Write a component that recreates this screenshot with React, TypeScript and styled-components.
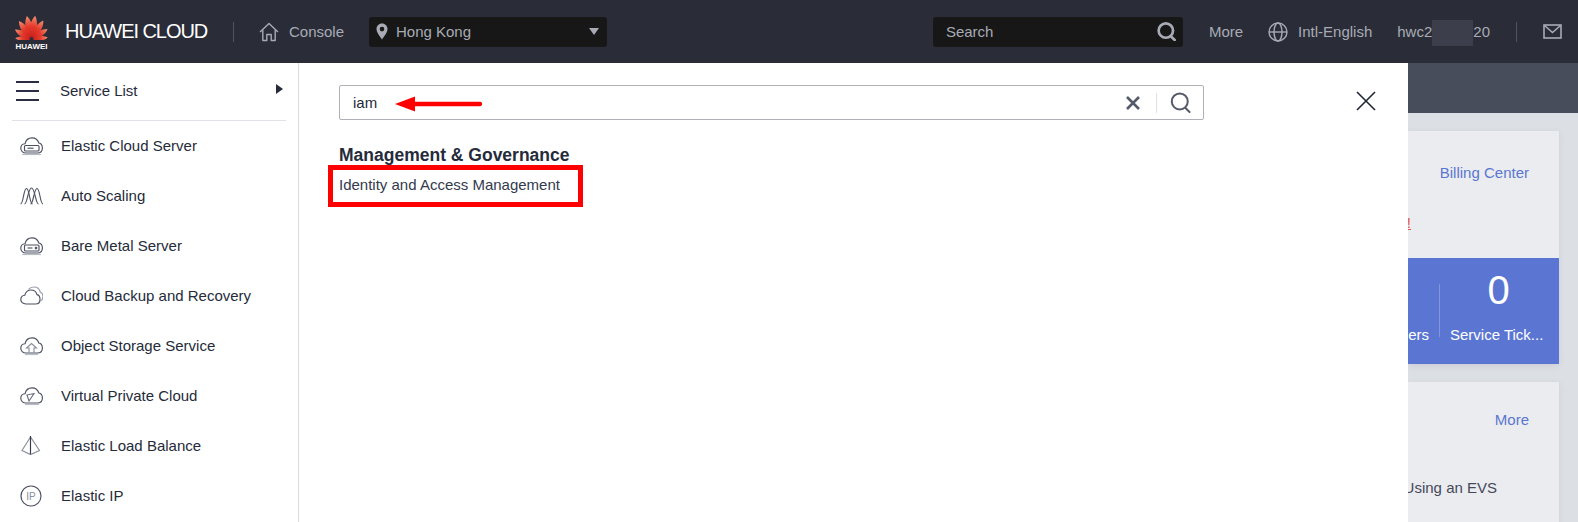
import { FC, ReactNode } from "react";
import styled, { createGlobalStyle } from "styled-components";

const GlobalStyle = createGlobalStyle`
  html, body {
    margin: 0;
    padding: 0;
    background: #dcdfe4;
  }
  body {
    font-family: "Liberation Sans", Arial, sans-serif;
    font-size: 15px;
    color: #252b3a;
  }
  * {
    box-sizing: border-box;
  }
`;

const Page = styled.div`
  width: 1578px;
  height: 522px;
  display: flex;
  flex-direction: column;
  overflow: hidden;
`;

const Header = styled.header`
  height: 63px;
  flex: none;
  display: flex;
  align-items: center;
  background: #2a2d38;
  color: #a8abb5;
  padding-left: 15px;
  padding-right: 16px;
`;

const LogoWrap = styled.div`
  width: 33px;
  display: flex;
  flex-direction: column;
  align-items: center;
  margin-right: 17px;
  padding-top: 2px;
`;

const LogoText = styled.span`
  color: #fff;
  font-size: 8px;
  font-weight: bold;
  line-height: 9px;
  margin-top: 2px;
  white-space: nowrap;
`;

const Brand = styled.span`
  color: #fff;
  font-size: 20px;
  white-space: nowrap;
  width: 143px;
  letter-spacing: -1.05px;
`;

const HeaderDivider = styled.span<{ $gap: number }>`
  width: 1px;
  height: 20px;
  background: #50535f;
  margin-left: ${({ $gap }) => $gap}px;
  flex: none;
`;

const ConsoleLink = styled.a`
  display: flex;
  align-items: center;
  gap: 10px;
  margin-left: 25px;
  width: 110px;
`;

const DarkField = styled.div<{ $width: number }>`
  width: ${({ $width }) => $width}px;
  height: 30px;
  background: #171717;
  border-radius: 3px;
  display: flex;
  align-items: center;
`;

const RegionField = styled(DarkField)`
  padding: 0 8px 0 7px;
  gap: 8px;
  margin-right: auto;
`;

const RegionName = styled.span`
  flex: 1;
`;

const Caret = styled.span`
  width: 0;
  height: 0;
  border-left: 5px solid transparent;
  border-right: 5px solid transparent;
  border-top: 7px solid #a8abb5;
`;

const SearchField = styled(DarkField)`
  padding: 0 7px 0 13px;
  justify-content: space-between;
  margin-right: 26px;
`;

const NavItem = styled.span<{ $gap: number }>`
  display: flex;
  align-items: center;
  gap: 10px;
  margin-right: ${({ $gap }) => $gap}px;
  white-space: nowrap;
`;

const MailItem = styled.span`
  display: flex;
  margin-left: 26px;
`;

const User = styled.span`
  display: flex;
  align-items: center;
`;

const Blur = styled.span`
  width: 41px;
  height: 26px;
  margin-top: 2px;
  background: #3c3f4b;
`;

const Body = styled.div`
  flex: 1;
  min-height: 0;
  display: flex;
`;

const Sidebar = styled.aside`
  width: 299px;
  flex: none;
  background: #fff;
  border-right: 1px solid #d8dade;
`;

const SidebarTitle = styled.div`
  height: 58px;
  margin: 0 12px;
  border-bottom: 1px solid #dfe1e6;
  display: flex;
  align-items: center;
  padding-left: 4px;
`;

const Burger = styled.span`
  width: 23px;
  height: 20px;
  border-top: 2px solid #2a2d44;
  border-bottom: 2px solid #2a2d44;
  display: flex;
  align-items: center;
  margin-top: -2px;
  &::before {
    content: "";
    width: 100%;
    height: 2px;
    background: #2a2d44;
  }
`;

const TitleText = styled.span`
  margin-left: 21px;
  flex: 1;
  margin-top: -3px;
`;

const TitleArrow = styled.span`
  width: 0;
  height: 0;
  margin-right: 3px;
  margin-top: -5px;
  border-top: 5px solid transparent;
  border-bottom: 5px solid transparent;
  border-left: 7px solid #252b3a;
`;

const ServiceList = styled.ul`
  list-style: none;
  margin: -1px 0 0;
  padding: 0 0 0 20px;
`;

const ServiceRow = styled.li`
  height: 50px;
  display: flex;
  align-items: center;
  gap: 18px;
  color: #252b3a;
  white-space: nowrap;
`;

const ServiceIcon = styled.svg`
  width: 23px;
  height: 23px;
  flex: none;
  fill: none;
  stroke: #4d5162;
  stroke-width: 1.15;
`;

const Panel = styled.section`
  width: 1109px;
  flex: none;
  background: #fff;
  position: relative;
  padding: 22px 0 0 40px;
`;

const SearchBox = styled.div`
  width: 865px;
  height: 35px;
  border: 1px solid #b0b0bb;
  border-radius: 2px;
  display: flex;
  align-items: center;
  padding: 0 12px 0 13px;
  position: relative;
`;

const QueryText = styled.span`
  flex: 1;
  color: #252b3a;
`;

const SearchSep = styled.span`
  width: 1px;
  height: 20px;
  background: #dfe1e6;
  margin: 0 13px 0 16px;
`;

const Arrow = styled.svg`
  position: absolute;
  left: 55px;
  top: 10px;
  width: 87px;
  height: 16px;
`;

const GroupTitle = styled.h3`
  margin: 25px 0 0;
  font-size: 17.5px;
  line-height: 20px;
  font-weight: bold;
  color: #252b3a;
`;

const ResultWrap = styled.div`
  position: relative;
  margin-top: 10px;
  line-height: 20px;
  color: #333a4d;
`;

const Highlight = styled.span`
  position: absolute;
  left: -11px;
  top: -10px;
  width: 255px;
  height: 42px;
  border: 5px solid #fe0000;
`;

const CloseButton = styled.svg`
  position: absolute;
  left: 1057px;
  top: 28px;
  width: 20px;
  height: 20px;
  stroke: #1f2433;
  stroke-width: 1.6;
`;

const Main = styled.main`
  flex: 1;
  min-width: 0;
  overflow: hidden;
  background: #dcdfe4;
`;

const TopStrip = styled.div`
  height: 50px;
  background: #484d5c;
  margin-bottom: 18px;
`;

const Card = styled.div`
  width: 151px;
  background: #ebecef;
  box-shadow: 0 2px 6px rgba(80, 90, 110, 0.12);
  margin-bottom: 18px;
`;

const CardHead = styled.div<{ $height: number }>`
  height: ${({ $height }) => $height}px;
  display: flex;
  justify-content: flex-end;
  align-items: center;
  padding-right: 30px;
`;

const CardLink = styled.a`
  color: #5a76d2;
  white-space: nowrap;
`;

const Warning = styled.div`
  height: 45px;
  display: flex;
  justify-content: flex-end;
  padding-right: 148px;
  color: #e2574c;
  text-decoration: underline;
  line-height: 20px;
`;

const Stats = styled.div`
  height: 106px;
  background: #5a76d2;
  color: #fff;
  display: flex;
  align-items: flex-start;
  padding-top: 26px;
`;

const StatLeft = styled.div`
  width: 32px;
  flex: none;
  height: 53px;
  border-right: 1px solid #8296dc;
  display: flex;
  justify-content: flex-end;
  align-items: flex-end;
  padding-right: 10px;
`;

const StatLeftLabel = styled.span`
  margin-bottom: -6px;
`;

const StatRight = styled.div`
  flex: 1;
  margin-top: -20px;
  padding-left: 10px;
  white-space: nowrap;
`;

const StatValue = styled.div`
  font-size: 40px;
  line-height: 52px;
  text-align: center;
  padding-right: 12px;
`;

const StatLabel = styled.div`
  margin-top: 9px;
  line-height: 20px;
`;

const DocCard = styled(Card)`
  min-height: 160px;
`;

const DocLine = styled.div`
  display: flex;
  justify-content: flex-end;
  padding-right: 62px;
  margin-top: 22px;
  white-space: nowrap;
  color: #44495a;
  line-height: 20px;
`;

const HuaweiLogo: FC = () => {
  const petals = [
    { angle: -84, size: 0.68 },
    { angle: -58, size: 0.8 },
    { angle: -33, size: 0.93 },
    { angle: -10, size: 1 },
    { angle: 10, size: 1 },
    { angle: 33, size: 0.93 },
    { angle: 58, size: 0.8 },
    { angle: 84, size: 0.68 },
  ];
  return (
    <svg width="33" height="25" viewBox="0 0 33 25">
      <defs>
        <linearGradient id="petal" x1="0" y1="0" x2="0" y2="1">
          <stop offset="0" stopColor="#f0906f" />
          <stop offset="0.5" stopColor="#e5392c" />
          <stop offset="1" stopColor="#c9201c" />
        </linearGradient>
      </defs>
      {petals.map(({ angle, size }) => (
        <path
          key={angle}
          d="M0 -2 C-5.4 -9 -4.4 -18 -0.5 -24 C3.4 -19 5 -9 0 -2 Z"
          fill="url(#petal)"
          transform={`translate(16.5 24.5) rotate(${angle}) scale(${size})`}
        />
      ))}
    </svg>
  );
};

const HomeIcon: FC = () => (
  <svg width="20" height="20" viewBox="0 0 20 20" fill="none" stroke="#a8abb5" strokeWidth="1.4" strokeLinejoin="round">
    <path d="M1 10 L10 1.5 L19 10" />
    <path d="M3.8 8 V18.5 H7.8 V12.5 H12.2 V18.5 H16.2 V8" />
  </svg>
);

const PinIcon: FC = () => (
  <svg width="12" height="17" viewBox="0 0 12 17">
    <path d="M6 0.5 C2.7 0.5 0.5 3 0.5 6 C0.5 9.5 4 13.5 6 16.5 C8 13.5 11.5 9.5 11.5 6 C11.5 3 9.3 0.5 6 0.5 Z M6 3.8 A2.3 2.3 0 1 1 6 8.4 A2.3 2.3 0 1 1 6 3.8 Z" fill="#a8abb5" fillRule="evenodd" />
  </svg>
);

const LensIcon: FC<{ $color: string; $width: number; $size: number }> = ({ $color, $width, $size }) => (
  <svg width={$size} height={$size} viewBox="0 0 20 20" fill="none" stroke={$color} strokeWidth={$width} strokeLinecap="round">
    <circle cx="9.3" cy="9" r="7.6" />
    <path d="M14.5 15 L18.6 19" />
  </svg>
);

const GlobeIcon: FC = () => (
  <svg width="20" height="20" viewBox="0 0 20 20" fill="none" stroke="#a8abb5" strokeWidth="1.4">
    <circle cx="10" cy="10" r="9" />
    <ellipse cx="10" cy="10" rx="4" ry="9" />
    <path d="M1 10 H19" />
  </svg>
);

const MailIcon: FC = () => (
  <svg width="19" height="15" viewBox="0 0 19 15" fill="none" stroke="#a8abb5" strokeWidth="1.6">
    <rect x="1" y="1" width="17" height="13" />
    <path d="M1.5 1.5 L9.5 8.5 L17.5 1.5" />
  </svg>
);

const CLOUD = "M6 19 C2.8 19 0.8 17 0.8 14.2 C0.8 11.6 2.8 10 5 9.8 C5.8 6.2 8.6 3.8 12 3.8 C15.4 3.8 18 6 18.8 9 C21 9.4 22.4 11.4 22.4 14 C22.4 17 20.4 19 17.4 19 Z";

const serviceIcons: Record<string, ReactNode> = {
  ecs: (
    <>
      <path d={CLOUD} />
      <rect x="4.5" y="11.5" width="14.5" height="5.5" rx="1" />
      <path d="M7.5 14.2 H13.5" />
      <path d="M2 20.5 H21" stroke="#b8bac4" />
    </>
  ),
  as: (
    <>
      <path d="M0.5 20 C3.5 20 3.5 4.5 6.5 4.5 C9.5 4.5 9.5 20 12.5 20" />
      <path d="M4.5 20 C7.5 20 8 4 11.5 4 C15 4 15.5 20 18.5 20" />
      <path d="M10.5 20 C13.5 20 14 4.5 17 4.5 C20 4.5 20 20 23 20" />
    </>
  ),
  bms: (
    <>
      <path d={CLOUD} />
      <rect x="4.5" y="11" width="14.5" height="6" rx="1" />
      <path d="M7.5 14 H12.5" />
      <circle cx="16" cy="14" r="0.8" />
      <path d="M2 20.5 H21" stroke="#b8bac4" />
    </>
  ),
  cbr: (
    <>
      <path d="M6 20 C2.8 20 0.8 18 0.8 15.5 C0.8 13 2.6 11.4 4.8 11.2 C5.6 8 8 6 11 6 C14 6 16.2 8 17 10.6 C19 11 20 13 20 15.4 C20 18 18.4 20 15.4 20 Z" />
      <path d="M8.5 5.4 C10 3.6 12 3 14 3 C17.4 3 19.6 5.4 20.2 8 C22 8.8 23 10.6 23 12.6 C23 14.6 22 16.2 20.4 17" stroke="#9a9dab" />
    </>
  ),
  obs: (
    <>
      <path d={CLOUD} />
      <path d="M9 18.5 V14 H6.5 L11.5 9.5 L16.5 14 H14 V18.5" stroke="#8a8e9c" />
      <path d="M5 20.5 H18" stroke="#b8bac4" />
    </>
  ),
  vpc: (
    <>
      <path d={CLOUD} />
      <path d="M7 11 L14 9.5 L9 17 Z M7 11 L9 17" stroke="#6d7180" />
      <path d="M5 20.5 H19" stroke="#b8bac4" />
    </>
  ),
  elb: (
    <>
      <path d="M10.5 3 L2 16.5 L10.5 20.5 L19.5 16.5 Z" stroke="#8a8e9c" />
      <path d="M10.5 2 V20" stroke="#333a4d" />
    </>
  ),
  eip: (
    <>
      <circle cx="11" cy="12" r="10" />
      <text x="11" y="15.5" textAnchor="middle" fontSize="10" fontFamily="Liberation Sans, sans-serif" stroke="none" fill="#8a8e9c">
        IP
      </text>
    </>
  ),
};

const services = [
  { key: "ecs", name: "Elastic Cloud Server" },
  { key: "as", name: "Auto Scaling" },
  { key: "bms", name: "Bare Metal Server" },
  { key: "cbr", name: "Cloud Backup and Recovery" },
  { key: "obs", name: "Object Storage Service" },
  { key: "vpc", name: "Virtual Private Cloud" },
  { key: "elb", name: "Elastic Load Balance" },
  { key: "eip", name: "Elastic IP" },
];

const App: FC = () => {
  return (
    <Page>
      <GlobalStyle />
      <Header>
        <LogoWrap>
          <HuaweiLogo />
          <LogoText>HUAWEI</LogoText>
        </LogoWrap>
        <Brand>HUAWEI CLOUD</Brand>
        <HeaderDivider $gap={25} />
        <ConsoleLink>
          <HomeIcon />
          Console
        </ConsoleLink>
        <RegionField $width={238}>
          <PinIcon />
          <RegionName>Hong Kong</RegionName>
          <Caret />
        </RegionField>
        <SearchField $width={250}>
          Search
          <LensIcon $color="#a8abb5" $width={2.8} $size={19} />
        </SearchField>
        <NavItem $gap={25}>More</NavItem>
        <NavItem $gap={25}>
          <GlobeIcon />
          Intl-English
        </NavItem>
        <User>
          hwc2
          <Blur />
          20
        </User>
        <HeaderDivider $gap={26} />
        <MailItem>
          <MailIcon />
        </MailItem>
      </Header>
      <Body>
        <Sidebar>
          <SidebarTitle>
            <Burger />
            <TitleText>Service List</TitleText>
            <TitleArrow />
          </SidebarTitle>
          <ServiceList>
            {services.map((service) => (
              <ServiceRow key={service.key}>
                <ServiceIcon viewBox="0 0 23 23">{serviceIcons[service.key]}</ServiceIcon>
                {service.name}
              </ServiceRow>
            ))}
          </ServiceList>
        </Sidebar>
        <Panel>
          <SearchBox>
            <QueryText>iam</QueryText>
            <svg width="14" height="14" viewBox="0 0 14 14" stroke="#555a6b" strokeWidth="2.6">
              <path d="M1 1 L13 13 M13 1 L1 13" />
            </svg>
            <SearchSep />
            <LensIcon $color="#555a6b" $width={1.9} $size={21} />
            <Arrow viewBox="0 0 87 16">
              <path d="M0 8 L20 0.5 V5.8 H85 A2.2 2.2 0 0 1 85 10.2 H20 V15.5 Z" fill="#fe0000" />
            </Arrow>
          </SearchBox>
          <GroupTitle>Management &amp; Governance</GroupTitle>
          <ResultWrap>
            Identity and Access Management
            <Highlight />
          </ResultWrap>
          <CloseButton viewBox="0 0 20 20">
            <path d="M1 1 L19 19 M19 1 L1 19" />
          </CloseButton>
        </Panel>
        <Main>
          <TopStrip />
          <Card>
            <CardHead $height={82}>
              <CardLink>Billing Center</CardLink>
            </CardHead>
            <Warning>!</Warning>
            <Stats>
              <StatLeft>
                <StatLeftLabel>ers</StatLeftLabel>
              </StatLeft>
              <StatRight>
                <StatValue>0</StatValue>
                <StatLabel>Service Tick...</StatLabel>
              </StatRight>
            </Stats>
          </Card>
          <DocCard>
            <CardHead $height={74}>
              <CardLink>More</CardLink>
            </CardHead>
            <DocLine>Using an EVS</DocLine>
          </DocCard>
        </Main>
      </Body>
    </Page>
  );
};

export default App;
